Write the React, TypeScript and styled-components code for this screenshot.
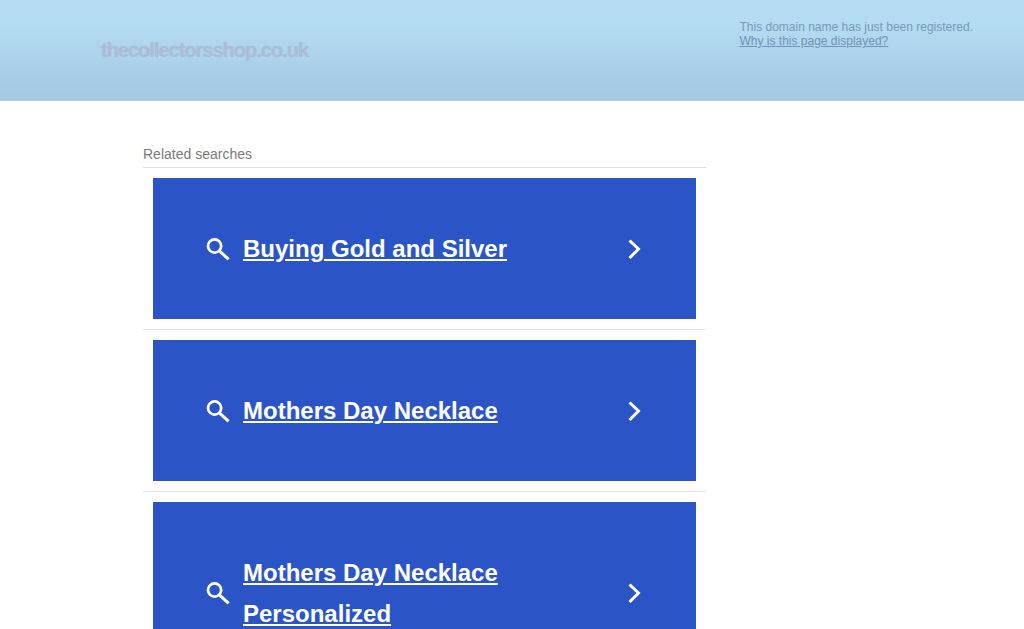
import React from 'react';
import styled, { createGlobalStyle } from 'styled-components';

const Global = createGlobalStyle`
  html, body { margin: 0; padding: 0; background: #fff; overflow: hidden; height: 629px; }
  body { font-family: "Liberation Sans", Arial, sans-serif; }
`;

const Header = styled.header`
  height: 100px;
  border-bottom: 1px solid #b4d0e3;
  background: linear-gradient(to bottom, #b5dcf3 0%, #b3dbf2 25%, #a3c8e2 100%);
  display: flex;
  justify-content: space-between;
`;

const Logo = styled.div`
  margin: 39px 0 0 101px;
  font-size: 20px;
  line-height: 23px;
  font-weight: 700;
  letter-spacing: -1px;
  color: #a9bed6;
  text-shadow: 0 0 1px #a9bed6;
`;

const Notice = styled.div`
  width: 284.5px;
  padding-top: 20px;
  font-size: 12px;
  line-height: 14px;
  color: #7999bb;
`;

const NoticeLink = styled.a`
  display: block;
  color: #7193b6;
  text-decoration: underline;
`;

const Main = styled.main`
  width: 563px;
  margin: 45px 0 0 143px;
`;

const Heading = styled.h2`
  margin: 0;
  height: 21px;
  font-size: 14px;
  line-height: 16px;
  font-weight: 400;
  color: #7a7a7a;
  border-bottom: 1px solid #e0e0e0;
`;

const Row = styled.div`
  padding: 10px;
  border-bottom: 1px solid #e2e2e2;
`;

const Card = styled.a`
  display: flex;
  align-items: center;
  background: #2b55c6;
  padding: 50px;
  color: #fff;
`;

const IconBox = styled.span`
  flex: none;
  width: 30px;
  height: 30px;
  margin-right: 10px;
  display: flex;
`;

const Label = styled.span`
  flex: 1;
  font-size: 24px;
  line-height: 41px;
  font-weight: 700;
  text-decoration: underline;
  padding-right: 90px;
`;

const Chevron = styled.span`
  flex: none;
  width: 30px;
  height: 30px;
  display: flex;
`;

const SearchIcon = () => (
  <svg width="30" height="30" viewBox="0 0 30 30" fill="none" stroke="#fff">
    <circle cx="11.6" cy="12" r="6.6" strokeWidth="2.7" />
    <path d="M16.4 16.8 25.6 25.4" strokeWidth="3" />
  </svg>
);

const ChevronIcon = () => (
  <svg width="30" height="30" viewBox="0 0 30 30" fill="none" stroke="#fff" strokeWidth="3">
    <path d="M13.5 6.5 22.5 15 13.5 24" />
  </svg>
);

const items = ['Buying Gold and Silver', 'Mothers Day Necklace', 'Mothers Day Necklace Personalized'];

export default function App() {
  return (
    <>
      <Global />
      <Header>
        <Logo>thecollectorsshop.co.uk</Logo>
        <Notice>
          This domain name has just been registered.
          <NoticeLink>Why is this page displayed?</NoticeLink>
        </Notice>
      </Header>
      <Main>
        <Heading>Related searches</Heading>
        {items.map((t) => (
          <Row key={t}>
            <Card>
              <IconBox><SearchIcon /></IconBox>
              <Label>{t}</Label>
              <Chevron><ChevronIcon /></Chevron>
            </Card>
          </Row>
        ))}
      </Main>
    </>
  );
}
